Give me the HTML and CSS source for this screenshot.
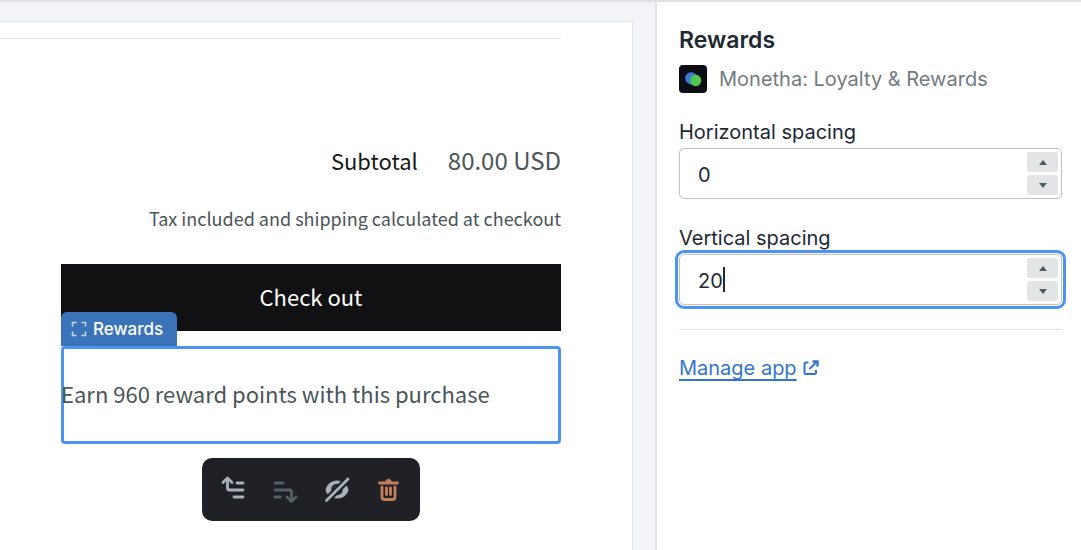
FILE: index.html
```html
<!DOCTYPE html>
<html lang="en">
<head>
<meta charset="utf-8">
<meta name="viewport" content="width=device-width, initial-scale=1">
<title>Rewards block settings</title>
<link rel="stylesheet" href="styles.css">
</head>
<body>
<div class="editor">
  <main class="preview">
    <div class="sheet">
      <div class="cart">
        <hr class="cart-rule">
        <div class="totals">
          <span class="totals-label">Subtotal</span>
          <span class="totals-value">80.00 USD</span>
        </div>
        <p class="tax-note">Tax included and shipping calculated at checkout</p>
        <button class="checkout" type="button">Check out</button>
        <section class="block">
          <div class="block-tag">
            <svg class="tag-icon" viewBox="0 0 16 16" fill="none" stroke="currentColor" stroke-width="1.500" aria-hidden="true">
              <path d="M1.500 5.500V1.500H5.500M10.500 1.500H14.500V5.500M14.500 10.500V14.500H10.500M5.500 14.500H1.500V10.500"/>
            </svg>
            <span>Rewards</span>
          </div>
          <p class="block-text">Earn 960 reward points with this purchase</p>
        </section>
        <div class="toolbar">
          <button class="tool" type="button" aria-label="Move up">
            <svg viewBox="0 0 28 28" fill="none" stroke="currentColor" stroke-width="2.800" stroke-linecap="round" stroke-linejoin="round"><path d="M4 7.500L8.500 3L13 7.500M8.500 3.500V13Q8.500 15 10.500 15H24M18 8H24M15 22H24"/></svg>
          </button>
          <button class="tool" type="button" aria-label="Move down" disabled>
            <svg viewBox="0 0 28 28" fill="none" stroke="currentColor" stroke-width="2.800" stroke-linecap="round" stroke-linejoin="round"><path d="M4 8h8M4 15h14.500Q20.500 15 20.500 17V26M16 22l4.500 4.500L25 22M4 22h5"/></svg>
          </button>
          <button class="tool" type="button" aria-label="Hide">
            <svg viewBox="0 0 28 28" fill="none"><path d="M2.500 15C4 9 8.500 5.500 14 5.500S24 9 25.500 15C24 20.500 19.500 23.500 14 23.500S4 20.500 2.500 15Z" fill="currentColor"/><circle cx="14" cy="14.500" r="5.800" fill="#202027"/><circle cx="14" cy="14.500" r="3.200" fill="currentColor"/><path d="M3.500 25.500L25 4" stroke="#202027" stroke-width="7"/><path d="M3.500 25.500L25 4" stroke="currentColor" stroke-width="2.800" stroke-linecap="round"/></svg>
          </button>
          <button class="tool tool-danger" type="button" aria-label="Remove">
            <svg viewBox="0 0 28 28" fill="none" stroke="currentColor" stroke-width="2.800" stroke-linecap="round" stroke-linejoin="round"><path d="M4.500 8H22.500M7 12V22Q7 24.500 9.500 24.500H17.500Q20 24.500 20 22V12M11.500 13V19.500M15.500 13V19.500"/><path d="M10.500 7.500C10.500 3 16.500 3 16.500 7.500Z" fill="currentColor" stroke-width="1"/></svg>
          </button>
        </div>
      </div>
    </div>
  </main>
  <aside class="sidebar">
    <h1 class="title">Rewards</h1>
    <div class="app">
      <svg class="app-logo" viewBox="0 0 28 28" aria-hidden="true">
        <rect width="28" height="28" rx="4" fill="#0c0d15"/>
        <ellipse cx="12.300" cy="13.400" rx="6.300" ry="5.900" fill="#3d7bd6" transform="rotate(45 12.300 13.400)"/>
        <ellipse cx="16.800" cy="15.500" rx="5.400" ry="5.800" fill="#50c94e"/>
      </svg>
      <span>Monetha: Loyalty &amp; Rewards</span>
    </div>
    <div class="field">
      <label for="horizontal">Horizontal spacing</label>
      <div class="number">
        <input id="horizontal" type="text" inputmode="numeric" value="0">
        <div class="spin">
          <button type="button" aria-label="Increase horizontal spacing"><svg viewBox="0 0 8 5"><path d="M4 0L8 5H0Z"/></svg></button>
          <button type="button" aria-label="Decrease horizontal spacing"><svg viewBox="0 0 8 5"><path d="M4 5L8 0H0Z"/></svg></button>
        </div>
      </div>
    </div>
    <div class="field">
      <label for="vertical">Vertical spacing</label>
      <div class="number number-focused">
        <input id="vertical" type="text" inputmode="numeric" value="20">
        <span class="caret"></span>
        <div class="spin">
          <button type="button" aria-label="Increase vertical spacing"><svg viewBox="0 0 8 5"><path d="M4 0L8 5H0Z"/></svg></button>
          <button type="button" aria-label="Decrease vertical spacing"><svg viewBox="0 0 8 5"><path d="M4 5L8 0H0Z"/></svg></button>
        </div>
      </div>
    </div>
    <hr class="divider">
    <a class="manage" href="#"><span>Manage app</span>
      <svg viewBox="0 0 16 16" fill="none" stroke="currentColor" stroke-width="2" aria-hidden="true"><path d="M5.500 2.500H3Q1.500 2.500 1.500 4V12.500Q1.500 14 3 14H11.500Q13 14 13 12.500V10M6.500 9L14 1.500"/><path d="M9.500 1.500H14.500V6.500" stroke-width="2.400"/></svg>
    </a>
  </aside>
</div>
</body>
</html>
```
FILE: styles.css
```css
* { box-sizing: border-box; }

body {
  margin: 0;
  background: #fff;
  color: #202832;
  font: 20px/28px Inter, "Liberation Sans", sans-serif;
}

button, input { font: inherit; }
hr { height: 0; margin: 0; border: 0; }

.editor {
  display: grid;
  grid-template-columns: minmax(0, 1fr) 426px;
  min-height: 100vh;
  border-top: 2px solid #dfe1e4;
}

.preview {
  display: flex;
  padding: 19px 22px 0 0;
  background: #f3f4f7;
}

.sheet {
  flex: 1;
  padding: 16px 71px 0 0;
  border-top: 1px solid #e2e4e7;
  border-right: 1px solid #e2e4e7;
  background: #fff;
  color: #4a5558;
  font-family: "Noto Sans CJK SC", "Noto Sans", sans-serif;
}

.cart {
  display: flex;
  flex-direction: column;
  padding-left: 61px;
}

.cart-rule {
  margin-left: -61px;
  border-top: 1px solid #e4e4e5;
}

.totals {
  display: flex;
  justify-content: flex-end;
  align-items: center;
  gap: 30px;
  margin-top: 103px;
  line-height: 36px;
}

.totals-label { color: #16191b; font-size: 22px; }
.totals-value { font-size: 24px; }

.tax-note {
  margin: 24px 0 0;
  font-size: 18px;
  line-height: 32px;
  text-align: right;
}

.checkout {
  height: 67px;
  margin-top: 30px;
  padding: 0 0 4px;
  border: 0;
  background: #111113;
  color: #fff;
  font-size: 22px;
}

.block {
  position: relative;
  margin-top: 15px;
  padding: 28px 0 32px;
  border-radius: 4px;
  box-shadow: inset 0 0 0 3px #4d92f5;
}

.block-text {
  margin: 0;
  font-size: 22px;
  line-height: 38px;
}

.block-tag {
  position: absolute;
  bottom: 100%;
  left: 0;
  display: flex;
  align-items: center;
  gap: 6px;
  height: 34px;
  padding: 0 14px 0 10px;
  border-radius: 6px 6px 0 0;
  background: #3a73b8;
  color: #fff;
  font: 500 17px/34px Inter, "Liberation Sans", sans-serif;
}

.tag-icon { width: 16px; height: 16px; color: #c9d6e6; }

.toolbar {
  display: flex;
  align-self: center;
  gap: 24px;
  margin-top: 14px;
  padding: 17px 17px 18px;
  border-radius: 10px;
  background: #202027;
}

.tool {
  display: flex;
  padding: 0;
  border: 0;
  background: none;
  color: #a9b2b9;
}

.tool svg { width: 28px; height: 28px; }
.tool:disabled { color: #536065; }
.tool-danger { color: #c47f5b; }

.sidebar {
  padding: 24px 19px 24px 22px;
  border-left: 2px solid #e1e3e6;
}

.title {
  margin: 0;
  font-size: 23px;
  font-weight: 600;
  line-height: 28px;
}

.app {
  display: flex;
  align-items: center;
  gap: 12px;
  margin: 11px 0 24px;
  color: #727b82;
}

.app-logo { width: 28px; height: 28px; }

.field { margin-bottom: 24px; }
.field label { display: block; line-height: 30px; }

.number {
  position: relative;
  display: flex;
  padding: 3px;
  border: 1px solid #bfc1c9;
  border-radius: 5px;
  margin-top: 1px;
}

.number-focused {
  outline: 3px solid #4d92f5;
  outline-offset: 1px;
}

.number input {
  flex: 1;
  min-width: 0;
  padding: 2px 15px 0;
  border: 0;
  outline: 0;
  background: none;
  color: inherit;
}

.caret {
  position: absolute;
  top: 12px;
  left: 43px;
  width: 2px;
  height: 25px;
  background: #202832;
}

.spin {
  display: grid;
  gap: 3px;
  width: 31px;
}

.spin button {
  display: grid;
  place-items: center;
  height: 20px;
  padding: 0;
  border: 0;
  border-radius: 3px;
  background: #e2e4e6;
}

.spin svg { width: 8px; height: 5px; fill: #4d5c60; }

.divider { border-top: 1px solid #dfe1e3; }

.manage {
  display: inline-flex;
  align-items: center;
  gap: 6px;
  margin-top: 24px;
  color: #3474cc;
  text-decoration: none;
}

.manage span { text-decoration: underline; text-underline-offset: 4px; }
.manage svg { width: 16px; height: 16px; }
```
